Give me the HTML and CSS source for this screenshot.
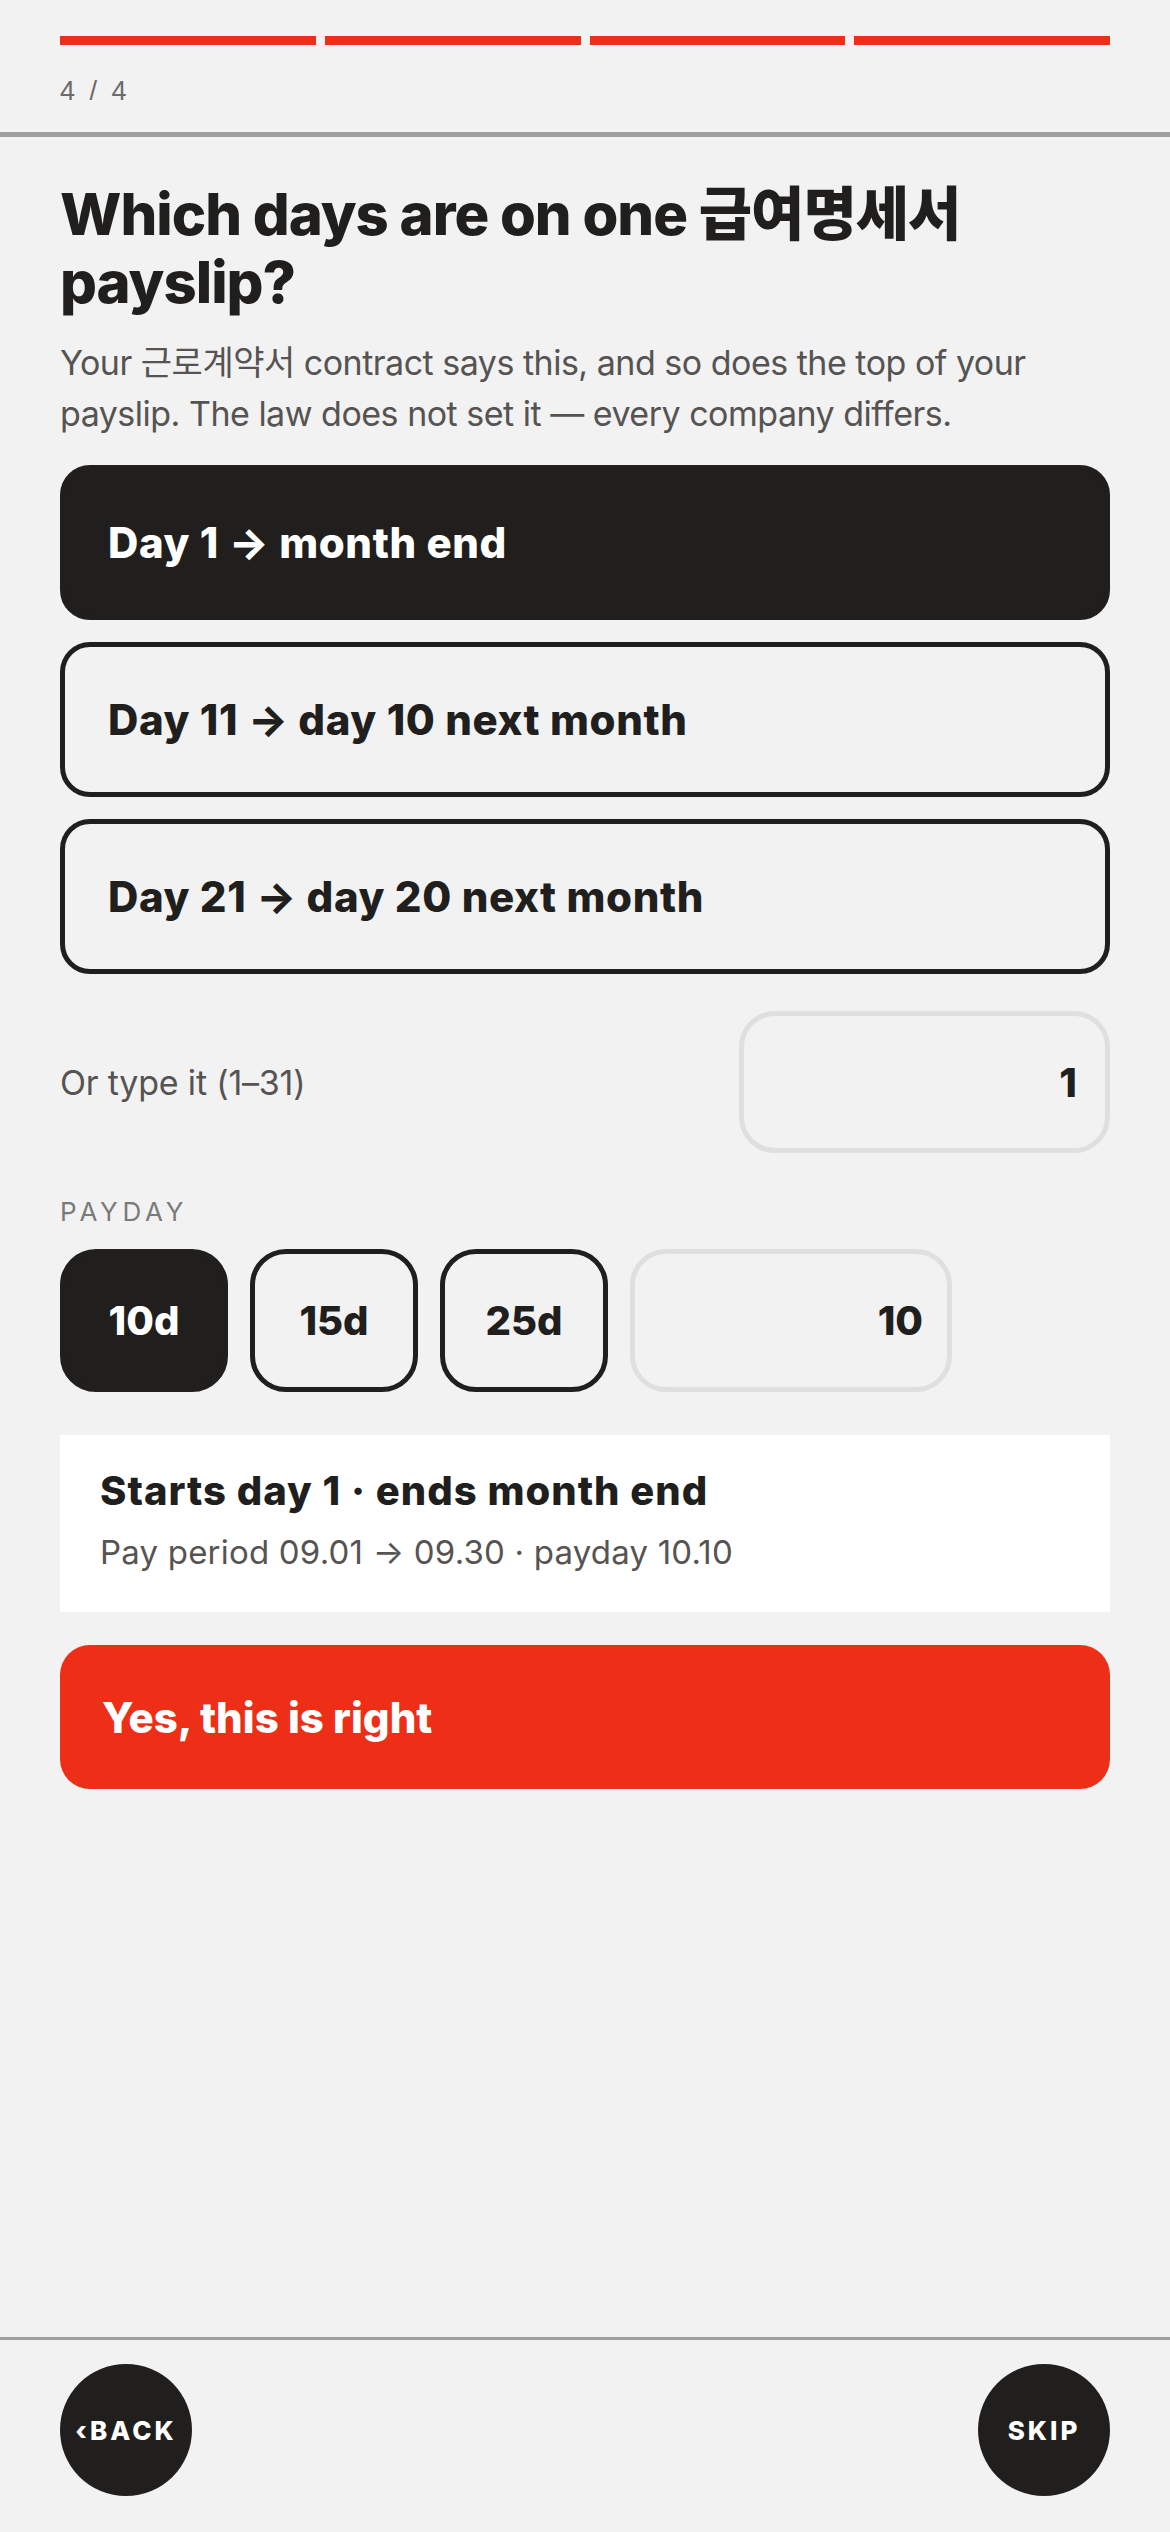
FILE: index.html
```html
<!DOCTYPE html>
<html lang="en">
<head>
<meta charset="utf-8">
<title>Pay period</title>
<link rel="stylesheet" href="styles.css">
</head>
<body>
<header class="top">
  <div class="bars">
    <span class="bar"></span><span class="bar"></span><span class="bar"></span><span class="bar"></span>
  </div>
  <div class="count">4 / 4</div>
</header>
<main class="main">
  <h1 class="title">Which days are on one 급여명세서 payslip?</h1>
  <p class="lead">Your 근로계약서 contract says this, and so does the top of your payslip. The law does not set it — every company differs.</p>
  <div class="options">
    <button class="option selected">Day 1 → month end</button>
    <button class="option">Day 11 → day 10 next month</button>
    <button class="option">Day 21 → day 20 next month</button>
  </div>
  <div class="type-row">
    <span class="type-label">Or type it (1–31)</span>
    <div class="field field-start">1</div>
  </div>
  <div class="section-label">PAYDAY</div>
  <div class="chips">
    <button class="chip selected">10d</button>
    <button class="chip">15d</button>
    <button class="chip">25d</button>
    <div class="field field-pay">10</div>
  </div>
  <section class="summary">
    <div class="summary-title">Starts day 1 · ends month end</div>
    <div class="summary-sub">Pay period 09.01 → 09.30 · payday 10.10</div>
  </section>
  <button class="confirm">Yes, this is right</button>
</main>
<footer class="bottom">
  <button class="round">‹BACK</button>
  <button class="round">SKIP</button>
</footer>
</body>
</html>
```
FILE: styles.css
```css
* { box-sizing: border-box; }
html, body { margin: 0; padding: 0; }
body {
  background: #f2f2f2;
  color: #201f1d;
  font-family: Inter, "Noto Sans CJK KR", sans-serif;
  min-height: 100vh;
  display: flex;
  flex-direction: column;
}
button { font-family: inherit; cursor: pointer; }

.top {
  padding: 36px 60px 0;
  border-bottom: 5px solid #a09f9f;
  height: 137px;
}
.bars { display: flex; gap: 9px; }
.bar { flex: 1; height: 9px; background: #ec2f16; }
.count {
  margin-top: 30px;
  font-family: "Liberation Sans", sans-serif;
  font-size: 27px;
  line-height: 32px;
  letter-spacing: 3.5px;
  color: #6b6b6b;
}

.main {
  flex: 1;
  padding: 43px 60px 0;
  display: flex;
  flex-direction: column;
}
.title {
  margin: 0;
  font-size: 58px;
  line-height: 68px;
  font-weight: 800;
  letter-spacing: -1px;
  color: #201f1d;
}
.lead {
  margin: 21px 0 0;
  font-size: 34px;
  line-height: 51px;
  color: #555453;
  letter-spacing: -0.5px;
}
.options {
  margin-top: 26px;
  display: flex;
  flex-direction: column;
  gap: 22px;
}
.option {
  height: 155px;
  border: 5px solid #201f1d;
  border-radius: 30px;
  background: transparent;
  color: #201f1d;
  text-align: left;
  padding: 0 0 0 43px;
  font-size: 42px;
  font-weight: 800;
  letter-spacing: 0.6px;
}
.option.selected { background: #201f1d; color: #fff; }

.type-row {
  margin-top: 37px;
  display: flex;
  align-items: center;
  justify-content: space-between;
}
.type-label { font-size: 34px; color: #555453; letter-spacing: -0.2px; }
.field {
  height: 142px;
  border: 5px solid #e0dfdd;
  border-radius: 36px;
  display: flex;
  align-items: center;
  justify-content: flex-end;
  font-size: 40px;
  font-weight: 800;
  color: #201f1d;
}
.field-start { width: 371px; padding-right: 28px; }
.field-pay { width: 322px; padding-right: 24px; }

.section-label {
  margin-top: 44px;
  font-size: 26px;
  letter-spacing: 4.7px;
  color: #7a7a7a;
  line-height: 30px;
}
.chips {
  margin-top: 22px;
  display: flex;
  gap: 22px;
}
.chip {
  width: 168px;
  height: 143px;
  border: 5px solid #201f1d;
  border-radius: 36px;
  background: transparent;
  color: #201f1d;
  font-size: 40px;
  font-weight: 800;
  padding: 0;
}
.chip.selected { background: #201f1d; color: #fff; }
.chips .field { height: 143px; }

.summary {
  margin-top: 43px;
  background: #fff;
  padding: 30px 40px 0;
  height: 177px;
}
.summary-title {
  font-size: 40px;
  font-weight: 800;
  line-height: 52px;
  letter-spacing: 1px;
}
.summary-sub {
  margin-top: 13px;
  font-size: 33px;
  line-height: 44px;
  color: #555453;
  letter-spacing: 0.2px;
}
.confirm {
  margin-top: 33px;
  height: 144px;
  border: 0;
  border-radius: 30px;
  background: #ec2f16;
  color: #fff;
  text-align: left;
  padding: 0 0 0 42px;
  font-size: 42px;
  font-weight: 800;
  letter-spacing: 0;
}

.bottom {
  border-top: 3px solid #a09f9f;
  padding: 24px 60px 36px;
  display: flex;
  justify-content: space-between;
}
.round {
  width: 132px;
  height: 132px;
  border-radius: 50%;
  border: 0;
  background: #201f1d;
  color: #fff;
  font-size: 26px;
  font-weight: 800;
  letter-spacing: 3px;
  padding: 0;
}
```
